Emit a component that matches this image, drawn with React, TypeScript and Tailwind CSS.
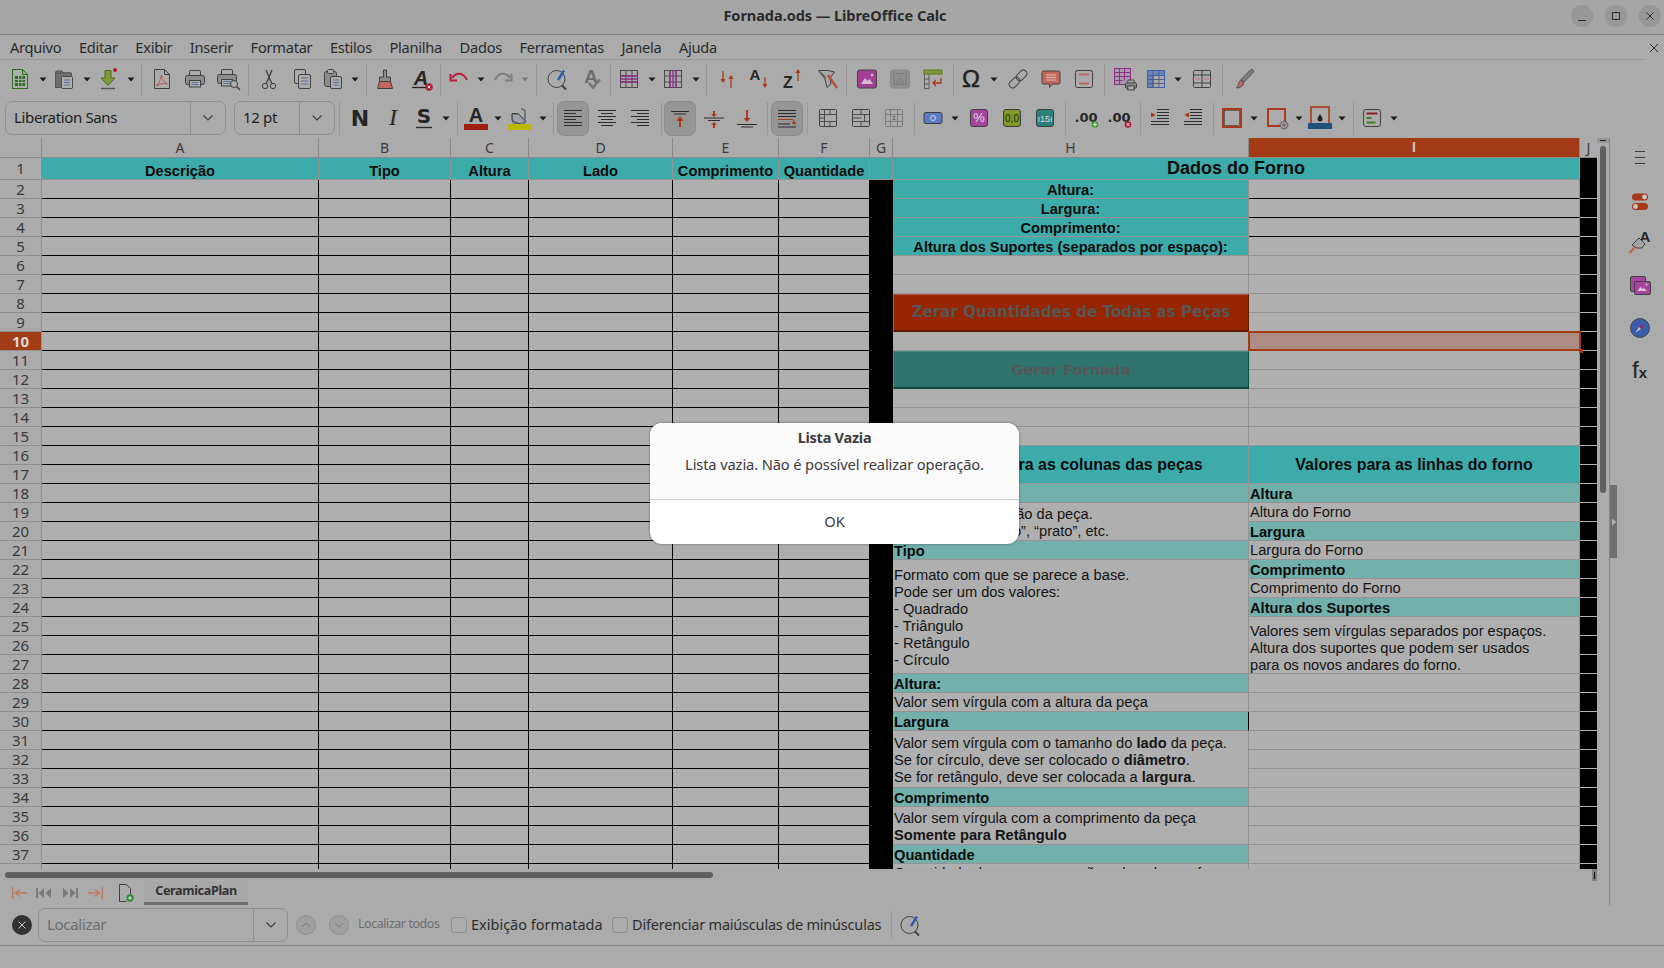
import React from "react";

const D = "#414141";
const OR = "#a83a1a";
const PU = "#8f2f8a";
const BL = "#3f62ad";
const LN = "#5d6f9f";

function I({ c = "", w = 24, h = 24, children }: { c?: string; w?: number; h?: number; children?: React.ReactNode }) {
  return (
    <svg width={w} height={h} viewBox={`0 0 ${w} ${h}`} fill="none" stroke={D} strokeWidth={1} className={"shrink-0 overflow-visible " + c}>
      {children}
    </svg>
  );
}
function Arr({ c = "", g = false }: { c?: string; g?: boolean }) {
  return (
    <svg width={10} height={24} viewBox="0 0 10 24" className={"shrink-0 " + c}>
      <path d="M1.5 10.5h7L5 14.5z" fill={g ? "#7d7d7d" : "#1c1c1c"} />
    </svg>
  );
}
function Sep({ c = "" }: { c?: string }) {
  return <div className={"w-px h-[33px] bg-[#989898] shrink-0 " + c}></div>;
}
function Tx({ x = 12, y = 18, s = 18, f = "Liberation Sans", b = true, i = false, fill = "#262626", a = "middle", children }: any) {
  return (
    <text x={x} y={y} fontSize={s} fontFamily={f} fontWeight={b ? 700 : 400} fontStyle={i ? "italic" : "normal"} fill={fill} stroke="none" textAnchor={a}>
      {children}
    </text>
  );
}
function Grid({ c = "", row, col, stroke = "#4a4a4a", color = PU }: { c?: string; row?: boolean; col?: boolean; stroke?: string; color?: string }) {
  return (
    <I c={c}>
      <rect x="3.5" y="3.5" width="17" height="17" stroke={stroke} />
      <path d="M3.5 9h17M3.5 15h17M9 3.5v17M15 3.5v17" stroke={stroke} />
      {row && <path d="M3.5 9h17M3.5 12h17M3.5 15h17" stroke={color} strokeWidth="1.4" />}
      {col && <path d="M9 3.5v17M12 3.5v17M15 3.5v17" stroke={color} strokeWidth="1.4" />}
    </I>
  );
}
function Lines({ rows }: { rows: [number, number][] }) {
  return (
    <I>
      {rows.map(([a, b], k) => (
        <path key={k} d={`M${a} ${4.5 + k * 3}H${b}`} stroke="#2c2c2c" />
      ))}
    </I>
  );
}
function Box({ c = "", children }: { c?: string; children?: React.ReactNode }) {
  return (
    <div className={"w-[32px] h-[35px] rounded-[7px] bg-[#969696] border border-[#8c8c8c] flex items-center justify-center shrink-0 " + c}>
      {children}
    </div>
  );
}
function Printer({ x = 0, y = 0 }: { x?: number; y?: number }) {
  return (
    <g transform={`translate(${x} ${y})`}>
      <rect x="6.5" y="3.5" width="11" height="6" rx="1" />
      <rect x="2.5" y="8.5" width="19" height="9" rx="2" fill="#8c8c8c" />
      <rect x="6.5" y="13.5" width="11" height="6.5" fill="#adadad" />
      <path d="M8.5 15.5h7M8.5 17.5h7" stroke={LN} />
    </g>
  );
}
function Toolbar1() {
  return (
    <div className="h-[40px] pb-[2px] flex items-center shrink-0">
      <I c="ml-[8px]">
        <path d="M4.5 2.5h10l5 5v14h-15z" stroke="#2a6e1e" fill="#a9ada9" />
        <path d="M14.5 2.5v5h5" stroke="#2a6e1e" />
        <rect x="7" y="9" width="10" height="10" fill="#2a6e1e" stroke="none" />
        <path d="M7 12.5h10M7 15.5h10M10.5 9v10M14 9v10" stroke="#a9ada9" />
      </I>
      <Arr c="ml-[6px]" />
      <I c="ml-[4px]">
        <path d="M3.5 20.5v-15a1.5 1.5 0 0 1 1.5-1.5h5l2 2h7v4" fill="#6e6e6e" stroke="#555" />
        <path d="M3.5 20.5h7V9.5h9V6H3.5z" fill="#6e6e6e" stroke="#555" />
        <rect x="9.5" y="9.5" width="11" height="12" rx="1" fill="#aeaeae" stroke="#4a4a4a" />
        <path d="M12 13h6M12 15.5h6M12 18h6" stroke={LN} />
      </I>
      <Arr c="ml-[6px]" />
      <I c="ml-[4px]">
        <path d="M9 3.5h6v7.5h4l-7 7.5-7-7.5h4z" fill="#7d9a35" stroke="#4b6a20" />
        <path d="M5 21.5h14" stroke="#555" strokeWidth="1.4" />
        <circle cx="19" cy="3" r="2" fill="#a51c30" stroke="none" />
      </I>
      <Arr c="ml-[6px]" />
      <Sep c="ml-[5px]" />
      <I c="ml-[8px]">
        <path d="M4.5 2.5h10l5 5v14h-15z" />
        <path d="M14.5 2.5v5h5" />
        <path d="M11.5 8c.5 5 2.5 7 6 9-4-1-7.5-.5-11 2 2-2 4-6 5-11z" stroke="#b4554f" />
      </I>
      <I c="ml-[9px]">
        <Printer />
      </I>
      <I c="ml-[10px]">
        <g transform="translate(-2 -1)">
          <Printer />
        </g>
        <circle cx="17" cy="17" r="3.5" fill="#adadad" />
        <path d="M19.5 19.5 23 23" strokeWidth="1.5" />
      </I>
      <Sep c="ml-[7px]" />
      <I c="ml-[8px]">
        <circle cx="8" cy="19" r="2.7" />
        <circle cx="16" cy="19" r="2.7" />
        <path d="M9.3 16.5 15 3M14.7 16.5 9 3" strokeWidth="1.3" />
      </I>
      <I c="ml-[9px]">
        <rect x="4.5" y="2.5" width="11" height="14" rx="1.5" />
        <rect x="8.5" y="7.5" width="12" height="14" rx="1.5" fill="#acacac" />
        <path d="M11 11h7M11 14h7M11 17h7" stroke={LN} />
      </I>
      <I c="ml-[7px]">
        <rect x="3.5" y="4.5" width="12" height="15" rx="2" fill="#8c8c8c" />
        <rect x="6.5" y="2.5" width="6" height="4" rx="1" fill="#acacac" />
        <rect x="9.5" y="9.5" width="11" height="12" rx="1.5" fill="#acacac" />
        <path d="M12 13h6M12 15.5h6M12 18h6" stroke={LN} />
      </I>
      <Arr c="ml-[5px]" />
      <Sep c="ml-[6px]" />
      <I c="ml-[6px]">
        <path d="M10.5 3h3v7h4v4.5H6.5V10h4z" fill="#8a8a8a" />
        <path d="M6.5 14.5h11l2 7h-15z" fill="#c0685a" />
      </I>
      <I c="ml-[12px]">
        <Tx y={18} s={20} i={true}>A</Tx>
        <path d="M3 20.5h14" stroke="#222" strokeWidth="1.3" />
        <circle cx="20" cy="20" r="3.8" fill="#b01c30" stroke="none" />
        <path d="M18.5 18.5l3 3m0-3l-3 3" stroke="#ddd" />
      </I>
      <Sep c="ml-[7px]" />
      <I c="ml-[6px]">
        <path d="M5 11c4-6 11-6 15 2" stroke="#b5213c" strokeWidth="2" />
        <path d="M3.5 7v6.5H10" stroke="#b5213c" strokeWidth="2" />
      </I>
      <Arr c="ml-[5px]" />
      <I c="ml-[5px]">
        <path d="M19 11c-4-6-11-6-15 2" stroke="#7e7e7e" strokeWidth="2" />
        <path d="M20.5 7v6.5H14" stroke="#7e7e7e" strokeWidth="2" />
      </I>
      <Arr c="ml-[5px]" g />
      <Sep c="ml-[6px]" />
      <I c="ml-[9px]">
        <circle cx="10.5" cy="12" r="8.5" />
        <path d="M16 18.5 20 22.5" strokeWidth="2" />
        <path d="M12 13 18 3.5" stroke="#2f5bb5" strokeWidth="2.5" />
      </I>
      <I c="ml-[10px]">
        <Tx x={11} y={16} s={19} fill="#6e6e6e">A</Tx>
        <path d="M9 16l4 4.5 7-8" stroke="#757575" strokeWidth="2.5" />
      </I>
      <Sep c="ml-[6px]" />
      <Grid c="ml-[6px]" row />
      <Arr c="ml-[6px]" />
      <Grid c="ml-[4px]" col />
      <Arr c="ml-[6px]" />
      <Sep c="ml-[5px]" />
      <I c="ml-[8px]">
        <path d="M8 4v11" stroke={OR} strokeWidth="1.3" />
        <path d="M5.5 12h5L8 16z" fill={OR} stroke="none" />
        <path d="M16 21V10" stroke={OR} strokeWidth="1.3" />
        <path d="M13.5 12h5L16 8z" fill={OR} stroke="none" />
      </I>
      <I c="ml-[8px]">
        <Tx x={8} y={13} s={15}>A</Tx>
        <path d="M18 10v10" stroke={OR} strokeWidth="1.3" />
        <path d="M15.5 17h5l-2.5 4z" fill={OR} stroke="none" />
      </I>
      <I c="ml-[10px]">
        <Tx x={7} y={21} s={16}>Z</Tx>
        <path d="M17 14V3" stroke={OR} strokeWidth="1.3" />
        <path d="M14.5 6h5L17 2z" fill={OR} stroke="none" />
      </I>
      <I c="ml-[11px]">
        <path d="M2.5 3.5h9l7 1.5-4.5 6 1 6-4 3.500-2-8.500z" fill="#a6a6a6" />
        <path d="M5 5.500 10 11" />
        <path d="M12 8 21 21" stroke="#b5513f" strokeWidth="2.5" />
      </I>
      <Sep c="ml-[6px]" />
      <I c="ml-[8px]">
        <rect x="2.5" y="3" width="19" height="18" rx="2" fill="#a23f95" stroke="#444" />
        <path d="M6 17l4-6 2.5 3 2-2 3.500 5z" fill="#d3bed1" stroke="none" />
        <circle cx="17" cy="8" r="1.3" fill="#d3bed1" stroke="none" />
      </I>
      <I c="ml-[9px]">
        <rect x="2.5" y="3" width="19" height="18" rx="2" fill="#8f8f8f" stroke="#8a8a8a" />
        <path d="M6 6.5h12v11H6zM9 17v-5M12 17v-7M15 17v-4" stroke="#7a7a7a" />
      </I>
      <I c="ml-[9px]">
        <rect x="3" y="3" width="18" height="4" fill="#7c9a34" stroke="#5c7a24" />
        <path d="M3.5 7v14.5H8V7M3.5 12h4.5M3.5 17h4.5" stroke="#5e5e5e" />
        <path d="M20 11v5h-8M15 13l-3 3 3 3" stroke={OR} strokeWidth="1.3" />
      </I>
      <Sep c="ml-[8px]" />
      <I c="ml-[5px]">
        <text x={12} y={20} fontSize={24} fontFamily="Liberation Sans" fill="#222" stroke="#222" strokeWidth={0.5} textAnchor="middle">Ω</text>
      </I>
      <Arr c="ml-[6px]" />
      <I c="ml-[7px]">
        <g transform="rotate(-45 12 12)">
          <rect x="1" y="8.5" width="12" height="7" rx="3.5" />
          <rect x="11" y="8.5" width="12" height="7" rx="3.5" />
        </g>
      </I>
      <I c="ml-[9px]">
        <path d="M3 5.500a1.500 1.500 0 0 1 1.500-1.500h15a1.500 1.500 0 0 1 1.500 1.500v10a1.500 1.500 0 0 1-1.500 1.500h-6l-3 3.500v-3.500H4.500A1.500 1.500 0 0 1 3 15.500z" fill="#c3675a" stroke="#444" />
        <path d="M7 8h10M7 10.5h10M7 13h10" stroke="#d8c0b8" />
      </I>
      <I c="ml-[9px]">
        <rect x="3.5" y="3.5" width="17" height="17" rx="2" />
        <path d="M7 7.5h10M7 16.5h10" stroke="#b86a5a" strokeWidth="2" />
      </I>
      <Sep c="ml-[8px]" />
      <I c="ml-[8px]">
        <rect x="1.5" y="1.5" width="16" height="16" stroke={PU} fill="#a89aa8" />
        <path d="M1.5 5.5h16M1.5 9.5h16M1.5 13.5h8M6.5 1.5v16M11.5 1.5v12" stroke={PU} />
        <g transform="translate(11 11) scale(.58)">
          <rect x="6.5" y="3.5" width="11" height="6" rx="1" strokeWidth="1.7" fill="#ababab" />
          <rect x="2.5" y="8.5" width="19" height="9" rx="2" fill="#8c8c8c" strokeWidth="1.7" />
          <rect x="6.5" y="13.5" width="11" height="7" fill="#adadad" strokeWidth="1.7" />
        </g>
      </I>
      <I c="ml-[7px]">
        <rect x="3.5" y="3.5" width="17" height="17" stroke={BL} />
        <rect x="3.5" y="3.5" width="5.5" height="17" fill="#6a83bc" stroke={BL} />
        <rect x="3.5" y="3.5" width="17" height="5" fill="#6a83bc" stroke={BL} />
        <path d="M3.5 12.5h17M3.5 16.5h17M9 3.5v17M15 3.5v17" stroke="#505f84" />
      </I>
      <Arr c="ml-[5px]" />
      <I c="ml-[7px]">
        <rect x="3.5" y="3.5" width="17" height="17" rx="1" />
        <path d="M12 3.5v17M3.5 8h17M3.5 16h17" />
        <path d="M2 12h20" stroke="#c0687a" strokeDasharray="2 1" />
      </I>
      <Sep c="ml-[8px]" />
      <I c="ml-[8px]">
        <path d="M20 2.5a2 2 0 0 1 2.5 2.5L13 15l-3-2.5z" fill="#7d7d7d" stroke="#555" />
        <path d="M9.5 13 13 16c-1 3-4 5-7.5 5 1.5-2 2-5 4-8z" fill="#c0685a" stroke="#555" />
      </I>
    </div>
  );
}

function Combo({ c = "", div, text }: { c: string; div: string; text: string }) {
  return (
    <div className={"h-[34px] rounded-[7px] border border-[#8f8f8f] flex items-center shrink-0 " + c}>
      <div className={"pl-[8px] pb-[2px] text-[15px] text-[#1e1e1e] whitespace-nowrap font-['Noto_Sans',sans-serif] tracking-[-0.35px] " + div}>{text}</div>
      <div className="flex-1 h-full border-l border-[#8f8f8f] flex items-center justify-center">
        <svg width="12" height="8" viewBox="0 0 12 8" fill="none" stroke="#3d3d3d" strokeWidth="1.1">
          <path d="M1.5 1.5 6 6l4.5-4.5" />
        </svg>
      </div>
    </div>
  );
}
function VA({ k }: { k: number }) {
  return (
    <I>
      {k === 0 && (
        <>
          <path d="M3 5.5h18M6 8h12" stroke="#2c2c2c" />
          <path d="M12 21v-8" stroke={OR} strokeWidth="2" />
          <path d="M8.5 15l3.5-5 3.5 5z" fill={OR} stroke="none" />
        </>
      )}
      {k === 1 && (
        <>
          <path d="M2 12h20M6 14.5h12" stroke="#2c2c2c" />
          <path d="M12 5v3" stroke={OR} strokeWidth="2" />
          <path d="M9 8h6l-3 3z" fill={OR} stroke="none" />
          <path d="M12 19v3" stroke={OR} strokeWidth="2" />
          <path d="M9 19h6l-3-3z" fill={OR} stroke="none" />
        </>
      )}
      {k === 2 && (
        <>
          <path d="M2 18.5h20M6 21h12" stroke="#2c2c2c" />
          <path d="M12 4v9" stroke={OR} strokeWidth="2" />
          <path d="M8.5 12h7L12 16z" fill={OR} stroke="none" />
        </>
      )}
    </I>
  );
}
function Cel({ c = "", fill, t, tf = "#ddd", ts = 10 }: { c?: string; fill: string; t: string; tf?: string; ts?: number }) {
  return (
    <I c={c}>
      <rect x="3.5" y="3.5" width="17" height="17" rx="2.5" fill={fill} stroke="#3d3d3d" />
      <Tx y={16} s={ts} b={false} fill={tf}>{t}</Tx>
    </I>
  );
}
function Toolbar2() {
  return (
    <div className="h-[38px] pb-[2px] flex items-center shrink-0">
      <Combo c="ml-[5px] w-[221px]" div="w-[184px]" text="Liberation Sans" />
      <Combo c="ml-[8px] w-[101px]" div="w-[64px]" text="12 pt" />
      <Sep c="ml-[4px]" />
      <I c="ml-[8px]">
        <Tx y={20} s={22} f="DejaVu Sans">N</Tx>
      </I>
      <I c="ml-[9px]">
        <Tx y={19} s={24} b={false} i={true} f="Liberation Serif">I</Tx>
      </I>
      <I c="ml-[7px]">
        <Tx y={17} s={20} f="DejaVu Sans">S</Tx>
        <path d="M4 21.5h16" stroke="#2c2c2c" strokeWidth="1.3" />
      </I>
      <Arr c="ml-[5px]" />
      <Sep c="ml-[6px]" />
      <I c="ml-[6px]">
        <Tx y={16} s={20}>A</Tx>
        <rect x="0" y="18" width="24" height="6" fill="#a01f12" stroke="none" />
      </I>
      <Arr c="ml-[5px]" />
      <I c="ml-[5px]">
        <path d="M4 8.5h7l6 6-4 3H5z" fill="#8e9cac" opacity=".5" />
        <path d="M4 7.5h6l8 8-4 3-6-2-4-2zM13 2.5l4 2v9" />
        <rect x="0" y="18" width="24" height="6" fill="#bcb900" stroke="none" />
      </I>
      <Arr c="ml-[6px]" />
      <Sep c="ml-[5px]" />
      <Box c="ml-[3px]">
        <Lines rows={[[3, 21], [3, 15], [3, 21], [3, 15], [3, 21], [3, 21]]} />
      </Box>
      <div className="ml-[6px]">
        <Lines rows={[[3, 21], [6, 18], [3, 21], [6, 18], [3, 21], [6, 18]]} />
      </div>
      <div className="ml-[9px]">
        <Lines rows={[[3, 21], [9, 21], [3, 21], [9, 21], [3, 21], [9, 21]]} />
      </div>
      <Sep c="ml-[9px]" />
      <Box c="ml-[2px]">
        <VA k={0} />
      </Box>
      <div className="ml-[6px]">
        <VA k={1} />
      </div>
      <div className="ml-[9px]">
        <VA k={2} />
      </div>
      <Sep c="ml-[8px]" />
      <Box c="ml-[3px]">
        <I>
          <path d="M3 4.5h18M3 7.5h18M3 10.5h18" stroke="#2c2c2c" />
          <path d="M3 13.5h14a2 2 0 0 1 2 2v1" stroke={OR} />
          <path d="M16.5 16h5L19 19z" fill={OR} stroke="none" />
          <path d="M3 18h12M3 21h18" stroke="#2c2c2c" />
        </I>
      </Box>
      <Sep c="ml-[4px]" />
      <I c="ml-[8px]">
        <rect x="3.5" y="3.5" width="17" height="17" rx="1" />
        <path d="M3.5 8.5h5v7h-5M3.5 12h5M20.5 8.5h-12M8.5 3.5v17M14 3.5v5M14 15.5v5M8.5 15.5h12" stroke="#4d4d4d" />
      </I>
      <I c="ml-[9px]">
        <rect x="3.5" y="3.5" width="17" height="17" rx="1" />
        <path d="M3.5 8.5h17M3.5 15.5h17M3.5 12h9M12 3.5v5M12 15.5v5M15.5 8.5v7" stroke="#4d4d4d" />
      </I>
      <I c="ml-[9px]">
        <rect x="3.5" y="3.5" width="17" height="17" rx="1" stroke="#7d7d7d" />
        <path d="M3.5 8.5h5M15.5 8.5h5M3.5 15.5h5M15.5 15.5h5M8.5 3.5v17M15.5 3.5v17M8.5 8.5h7M8.5 15.5h7" stroke="#7d7d7d" />
        <path d="M10 10h4l-2 2zM10 14h4l-2-2z" fill="#6a6a6a" stroke="none" />
      </I>
      <Sep c="ml-[8px]" />
      <I c="ml-[6px]">
        <rect x="3" y="6.5" width="18" height="11" rx="2" fill="#5b7cc4" stroke="#3d3d3d" />
        <circle cx="12" cy="12" r="2.5" stroke="#c8d3ea" />
      </I>
      <Arr c="ml-[5px]" />
      <Cel c="ml-[7px]" fill="#a8449f" t="%" ts={13} />
      <Cel c="ml-[9px]" fill="#809b27" t="0,0" tf="#202020" ts={10} />
      <Cel c="ml-[9px]" fill="#2c807a" t="ı15ı" ts={9} />
      <Sep c="ml-[8px]" />
      <I c="ml-[9px]">
        <Tx x={11} y={16} s={13} f="DejaVu Sans">.00</Tx>
        <circle cx="20" cy="18.5" r="3.3" fill="#3f9e3a" stroke="none" />
        <path d="M18 18.5h4M20 16.5v4" stroke="#e4e4e4" />
      </I>
      <I c="ml-[9px]">
        <Tx x={11} y={16} s={13} f="DejaVu Sans">.00</Tx>
        <circle cx="20" cy="18.5" r="3.3" fill="#b01c30" stroke="none" />
        <path d="M18.5 17l3 3m0-3l-3 3" stroke="#e4e4e4" />
      </I>
      <Sep c="ml-[8px]" />
      <I c="ml-[7px]">
        <path d="M3 6.5l4.5 2.5L3 11.5z" fill={OR} stroke="none" />
        <path d="M9 3.5h12M9 6.5h12M9 9.5h12M9 12.5h12M3 15.5h18M3 18.5h18" stroke="#2c2c2c" />
      </I>
      <I c="ml-[9px]">
        <path d="M8 6.5 3.5 9 8 11.5z" fill={OR} stroke="none" />
        <path d="M9 3.5h12M9 6.5h12M9 9.5h12M9 12.5h12M3 15.5h18M3 18.5h18" stroke="#2c2c2c" />
      </I>
      <Sep c="ml-[8px]" />
      <I c="ml-[6px]">
        <rect x="3" y="3" width="18" height="18" stroke={OR} strokeWidth="2" />
        <rect x="4.5" y="4.5" width="15" height="15" stroke="#333" strokeWidth=".6" />
      </I>
      <Arr c="ml-[5px]" />
      <I c="ml-[6px]">
        <rect x="3" y="3" width="17" height="17" stroke={OR} strokeWidth="2" />
        <circle cx="19" cy="19" r="3.7" fill="#a4a4a4" stroke="#5e5e5e" strokeWidth="1.5" strokeDasharray="1.5 .8" />
        <circle cx="19" cy="19" r="1.2" stroke="#5e5e5e" />
      </I>
      <Arr c="ml-[5px]" />
      <I c="ml-[4px]">
        <rect x="3" y="1" width="18" height="18" stroke={OR} strokeWidth="1.6" />
        <path d="M12 8c2 3 2.5 4 2.5 5a2.5 2.5 0 0 1-5 0c0-1 .5-2 2.5-5z" fill="#222" stroke="none" />
        <rect x="0" y="17" width="24" height="6" fill="#1f4f7d" stroke="none" />
      </I>
      <Arr c="ml-[5px]" />
      <Sep c="ml-[6px]" />
      <I c="ml-[6px]">
        <rect x="3.5" y="3.5" width="17" height="17" rx="2.5" />
        <path d="M6.5 7.5h11" stroke="#8d1f20" strokeWidth="2" />
        <path d="M6.5 12h5" stroke="#3f7d22" strokeWidth="2" />
        <path d="M6.5 16.5h9" stroke="#3f7d22" strokeWidth="2" />
      </I>
      <Arr c="ml-[5px]" />
    </div>
  );
}

const LSANS = "font-['Liberation_Sans',sans-serif]";
const gridCell = "border-r border-b border-[#939393] flex items-center overflow-hidden whitespace-nowrap min-w-0 ";
const teal = gridCell + "bg-[#3dabaa] ";
const light = gridCell + "bg-[#72b0ab] pl-[1px] pt-[1px] font-bold text-[#0c0c0c] ";
const plain = gridCell + "bg-[#afafaf] ";
const body = "pl-[1px] text-[#141414] leading-[17px] ";

function Blank({ c = "" }: { c?: string }) {
  return <div className={plain + c}></div>;
}
function Txt({ c = "", children }: { c?: string; children?: React.ReactNode }) {
  return <div className={plain + body + "pt-[1px] " + c}>{children}</div>;
}
function Lt({ c = "", children }: { c?: string; children?: React.ReactNode }) {
  return <div className={light + c}>{children}</div>;
}
function Multi({ c = "", lines }: { c?: string; lines: React.ReactNode[] }) {
  return (
    <div className={plain + "!flex flex-col !items-start justify-center " + body + c}>
      {lines.map((l, k) => (
        <div key={k}>{l}</div>
      ))}
    </div>
  );
}
function TealH({ children }: { children?: React.ReactNode }) {
  return <div className={teal + "justify-center pt-[1px] font-bold text-[#0c0c0c]"}>{children}</div>;
}

const rightCols: Record<number, React.ReactNode> = {
  2: (<><TealH>Altura:</TealH><Blank c="!border-b-black" /></>),
  3: (<><TealH>Largura:</TealH><Blank c="!border-b-black" /></>),
  4: (<><TealH>Comprimento:</TealH><Blank c="!border-b-black" /></>),
  5: (<><TealH>Altura dos Suportes (separados por espaço):</TealH><Blank /></>),
  6: (<><Blank /><Blank /></>),
  7: (<><Blank /><Blank /></>),
  8: (<>
    <div className="row-span-2 bg-[#972600] border-t border-l border-t-[#b35c45] border-l-[#b35c45] border-r border-b-2 border-r-[#651a00] border-b-[#651a00] flex items-center justify-center font-['DejaVu_Sans',sans-serif] font-bold text-[15.1px] text-[#565656]">
      Zerar Quantidades de Todas as Peças
    </div>
    <Blank />
  </>),
  9: (<Blank />),
  10: (<>
    <Blank />
    <div className="relative z-10 bg-[#ac8e84] border-b border-[#939393]">
      <div className="absolute -left-[1px] -top-[1px] right-[-1px] bottom-[-1px] border-2 border-[#a33b16]"></div>
      <div className="absolute -right-[3px] -bottom-[3px] w-[4px] h-[4px] bg-[#a33b16]"></div>
    </div>
  </>),
  11: (<>
    <div className="row-span-2 bg-[#2e746c] border-t border-l border-t-[#4f8c86] border-l-[#4f8c86] border-r border-b-2 border-r-[#0f4a42] border-b-[#0f4a42] flex items-center justify-center font-['DejaVu_Sans',sans-serif] font-bold text-[14.67px] text-[#565656]">
      Gerar Fornada
    </div>
    <Blank />
  </>),
  12: (<Blank />),
  13: (<><Blank /><Blank /></>),
  14: (<><Blank /><Blank /></>),
  15: (<><Blank /><Blank /></>),
  16: (<>
    <div className={teal + "row-span-2 justify-center font-bold text-[16px] text-[#0c0c0c]"}>Valores para as colunas das peças</div>
    <div className={teal + "row-span-2 justify-center font-bold text-[16px] text-[#0c0c0c]"}>Valores para as linhas do forno</div>
  </>),
  18: (<><Lt>Descrição</Lt><Lt>Altura</Lt></>),
  19: (<><Multi c="row-span-2 pt-[2px]" lines={["Nome ou a descrição da peça.", "Por exemplo: “copo”, “prato”, etc."]} /><Txt>Altura do Forno</Txt></>),
  20: (<Lt>Largura</Lt>),
  21: (<><Lt>Tipo</Lt><Txt>Largura do Forno</Txt></>),
  22: (<>
    <Multi c="row-span-6 pt-[2px]" lines={["Formato com que se parece a base.", "Pode ser um dos valores:", "- Quadrado", "- Triângulo", "- Retângulo", "- Círculo"]} />
    <Lt>Comprimento</Lt>
  </>),
  23: (<Txt>Comprimento do Forno</Txt>),
  24: (<Lt>Altura dos Suportes</Lt>),
  25: (<Multi c="row-span-3 !justify-start pt-[6px]" lines={["Valores sem vírgulas separados por espaços.", "Altura dos suportes que podem ser usados", "para os novos andares do forno."]} />),
  28: (<><Lt>Altura:</Lt><Blank /></>),
  29: (<><Txt>Valor sem vírgula com a altura da peça</Txt><Blank /></>),
  30: (<><Lt c="!border-r-black">Largura</Lt><Blank /></>),
  31: (<>
    <Multi c="row-span-3 pt-[2px]" lines={[
      <>Valor sem vírgula com o tamanho do <b>lado</b> da peça.</>,
      <>Se for círculo, deve ser colocado o <b>diâmetro</b>.</>,
      <>Se for retângulo, deve ser colocada a <b>largura</b>.</>,
    ]} />
    <Blank />
  </>),
  32: (<Blank />),
  33: (<Blank />),
  34: (<><Lt>Comprimento</Lt><Blank /></>),
  35: (<>
    <Multi c="row-span-2 pt-[2px]" lines={["Valor sem vírgula com a comprimento da peça", <b>Somente para Retângulo</b>]} />
    <Blank />
  </>),
  36: (<Blank />),
  37: (<><Lt>Quantidade</Lt><Blank /></>),
  38: (<><Txt>Quantidade de peças que serão colocadas no forno.</Txt><Blank /></>),
};

const colHead = "border-r border-b border-[#8a8a8a] flex items-center justify-center text-[14px] text-[#3c3c3c] font-['Noto_Sans',sans-serif] ";
const rowHead = "border-r border-b border-[#8f8f8f] flex items-center justify-center text-[15px] text-[#3a3a3a] font-['Noto_Sans',sans-serif] bg-[#ababab] ";
const bk = "border-r border-b border-black bg-[#afafaf]";
const hd = "flex items-center justify-center pt-[4px] font-bold text-[#0c0c0c] border-r border-b border-[#939393] bg-[#3dabaa] overflow-hidden whitespace-nowrap";

function Sheet() {
  const rows: React.ReactNode[] = [];
  for (let n = 2; n <= 38; n++) {
    rows.push(
      <React.Fragment key={n}>
        <div className={n === 10 ? rowHead + "!bg-[#a33b16] !text-[#d9d9d9] font-bold" : rowHead}>{n}</div>
        <div className={bk}></div>
        <div className={bk}></div>
        <div className={bk}></div>
        <div className={bk}></div>
        <div className={bk}></div>
        <div className={bk}></div>
        <div className="bg-black"></div>
        {rightCols[n]}
        <div className="bg-black border-b border-[#b4b4b4]"></div>
      </React.Fragment>
    );
  }
  return (
    <div className={"w-[1597px] h-[731px] overflow-hidden grid grid-cols-[42px_277px_132px_78px_144px_106px_91px_23px_356px_331px_17px] grid-rows-[20px_22px] auto-rows-[19px] text-[14.67px] relative " + LSANS}>
      <div className="border-r border-b border-[#8a8a8a]"></div>
      <div className={colHead}>A</div>
      <div className={colHead}>B</div>
      <div className={colHead}>C</div>
      <div className={colHead}>D</div>
      <div className={colHead}>E</div>
      <div className={colHead}>F</div>
      <div className={colHead}>G</div>
      <div className={colHead}>H</div>
      <div className="border-r border-b border-[#8a8a8a] flex items-center justify-center text-[14px] bg-[#a33b16] text-[#c9c9c9] font-bold font-['Liberation_Sans',sans-serif]">I</div>
      <div className="flex items-center justify-center text-[14px] text-[#3c3c3c] border-b border-[#8a8a8a] font-['Noto_Sans',sans-serif]">J</div>

      <div className={rowHead}>1</div>
      <div className={hd}>Descrição</div>
      <div className={hd}>Tipo</div>
      <div className={hd}>Altura</div>
      <div className={hd}>Lado</div>
      <div className={hd}>Comprimento</div>
      <div className={hd}>Quantidade</div>
      <div className={hd}></div>
      <div className={teal + "col-span-2 justify-center font-bold text-[18px] text-[#0c0c0c]"}>Dados do Forno</div>
      <div className="bg-black"></div>
      {rows}
    </div>
  );
}

function Find() {
  return (
    <div className="h-[39px] pb-[2px] flex items-center shrink-0 font-['Noto_Sans',sans-serif]">
      <div className="ml-[12px] w-[20px] h-[20px] rounded-full bg-[#333333] flex items-center justify-center shrink-0">
        <svg width="10" height="10" viewBox="0 0 10 10" stroke="#c8c8c8" fill="none">
          <path d="M1.5 1.5l7 7m0-7l-7 7" />
        </svg>
      </div>
      <div className="ml-[6px] w-[250px] h-[34px] rounded-[7px] border border-[#8f8f8f] flex items-center shrink-0">
        <div className="w-[214px] pl-[8px] text-[15px] text-[#6e6e6e] tracking-[-0.3px]">Localizar</div>
        <div className="flex-1 h-full border-l border-[#8f8f8f] flex items-center justify-center">
          <svg width="12" height="8" viewBox="0 0 12 8" fill="none" stroke="#3d3d3d" strokeWidth="1.1">
            <path d="M1.5 1.5 6 6l4.5-4.5" />
          </svg>
        </div>
      </div>
      <div className="ml-[8px] w-[20px] h-[20px] rounded-full border border-[#8f8f8f] bg-[#a0a0a0] flex items-center justify-center shrink-0">
        <svg width="10" height="8" viewBox="0 0 10 8" fill="none" stroke="#7b7b7b">
          <path d="M1 6l4-4 4 4" />
        </svg>
      </div>
      <div className="ml-[13px] w-[20px] h-[20px] rounded-full border border-[#8f8f8f] bg-[#a0a0a0] flex items-center justify-center shrink-0">
        <svg width="10" height="8" viewBox="0 0 10 8" fill="none" stroke="#7b7b7b">
          <path d="M1 2l4 4 4-4" />
        </svg>
      </div>
      <div className="ml-[9px] w-[84px] text-[12.5px] text-[#6e6e6e] whitespace-nowrap tracking-[-0.45px]">Localizar todos</div>
      <div className="ml-[9px] w-[16px] h-[16px] rounded-[3px] border border-[#8f8f8f] shrink-0"></div>
      <div className="ml-[4px] w-[137px] text-[14.5px] text-[#2e2e2e] whitespace-nowrap tracking-[0px]">Exibição formatada</div>
      <div className="ml-[4px] w-[16px] h-[16px] rounded-[3px] border border-[#8f8f8f] shrink-0"></div>
      <div className="ml-[4px] w-[254px] text-[14.5px] text-[#2e2e2e] whitespace-nowrap tracking-[-0.2px]">Diferenciar maiúsculas de minúsculas</div>
      <div className="ml-[5px] w-px h-[28px] bg-[#989898] shrink-0"></div>
      <I c="ml-[7px]">
        <circle cx="10.5" cy="12" r="8.5" />
        <path d="M16 18.5 20 22.5" strokeWidth="2" />
        <path d="M12 13 18 3.5" stroke="#2f5bb5" strokeWidth="2.5" />
      </I>
    </div>
  );
}

function Sidebar() {
  return (
    <div className="w-[55px] flex flex-col items-center border-l border-[#8a8a8a] pt-[7px] pl-[5px] shrink-0 relative">
      <I>
        <path d="M7 6.5h10M7 12.5h10M7 18.5h10" stroke="#3a3a3a" />
      </I>
      <I c="mt-[21px]">
        <rect x="4" y="3.5" width="16" height="7" rx="3.5" fill={OR} stroke="none" />
        <circle cx="16.5" cy="7" r="2.4" fill="#c8c8c8" stroke="none" />
        <rect x="4" y="13" width="16" height="7" rx="3.5" fill={OR} stroke="none" />
        <circle cx="7.5" cy="16.5" r="2.4" fill="#c8c8c8" stroke="none" />
      </I>
      <I c="mt-[17px]">
        <Tx x={17} y={11} s={15}>A</Tx>
        <path d="M4 14l7-7 6 6-3 4H9z" fill="#a4a4a4" />
        <path d="M7 16 1.5 22" stroke="#c0685a" strokeWidth="2.5" />
      </I>
      <I c="mt-[19px]">
        <rect x="2.5" y="2.5" width="15" height="15" rx="1.5" fill="#a8449f" />
        <rect x="6.5" y="7.5" width="16" height="13" rx="1.5" fill="#a8449f" />
        <path d="M9.5 17l3-4 2 2 1.5-1 3 3z" fill="#d9c6d6" stroke="none" />
        <circle cx="18.5" cy="10.5" r="1" fill="#d9c6d6" stroke="none" />
      </I>
      <I c="mt-[18px]">
        <circle cx="12" cy="12" r="9.5" fill="#3a5dae" stroke="#444" />
        <path d="M16.5 7.500 13 13l-2-2z" fill="#b5213c" stroke="none" />
        <path d="M7.500 16.500 11 11l2 2z" fill="#c8c8c8" stroke="none" />
      </I>
      <div className="mt-[18px] w-[24px] h-[24px] flex items-baseline justify-center text-[#262626] font-['Liberation_Sans',sans-serif] text-[24px] leading-[24px]">
        f<span className="text-[15px] font-bold">x</span>
      </div>
      <div className="absolute left-0 top-[347px] w-[7px] h-[73px] bg-[#707070] flex items-center justify-center">
        <svg width="6" height="8" viewBox="0 0 6 8">
          <path d="M1 0.5 5.5 4 1 7.5z" fill="#b0b0b0" />
        </svg>
      </div>
    </div>
  );
}

export default function App() {
  return (
    <div className="w-[1664px] h-[968px] bg-[#ababab] flex flex-col overflow-hidden relative">
      <div className="h-[35px] border-b border-[#868686] bg-[#a6a6a6] flex items-center justify-end relative shrink-0">
        <div className="absolute inset-x-0 pl-[6px] text-center font-['Noto_Sans',sans-serif] font-bold text-[14.5px] text-[#2a2a2a] tracking-[-0.04px] -mt-[2px]">Fornada.ods — LibreOffice Calc</div>
        <div className="flex gap-[12px] pr-[3px] -mt-[2px] relative">
          <div className="w-[22px] h-[22px] rounded-full bg-[#979797] flex items-center justify-center">
            <svg width="10" height="10" viewBox="0 0 10 10" stroke="#2f2f2f" fill="none"><path d="M1 9.5h8" /></svg>
          </div>
          <div className="w-[22px] h-[22px] rounded-full bg-[#979797] flex items-center justify-center">
            <svg width="10" height="10" viewBox="0 0 10 10" stroke="#2f2f2f" fill="none"><rect x="1.5" y="1.5" width="7" height="7" /></svg>
          </div>
          <div className="w-[22px] h-[22px] rounded-full bg-[#979797] flex items-center justify-center">
            <svg width="10" height="10" viewBox="0 0 10 10" stroke="#2f2f2f" fill="none"><path d="M1.5 1.5l7 7m0-7l-7 7" /></svg>
          </div>
        </div>
      </div>
      <div className="h-[25px] flex shrink-0">
        <div className="w-[1644px] border-b border-[#989898] pt-[1px] flex items-center gap-[17.5px] pl-[10px] font-['Noto_Sans',sans-serif] text-[14.6px] text-[#2a2a2a] tracking-[-0.24px]">
          <span>Arquivo</span><span>Editar</span><span>Exibir</span><span>Inserir</span><span>Formatar</span><span>Estilos</span><span>Planilha</span><span>Dados</span><span>Ferramentas</span><span>Janela</span><span>Ajuda</span>
        </div>
        <div className="flex-1 flex items-center justify-center">
          <svg width="10" height="10" viewBox="0 0 10 10" stroke="#2f2f2f" fill="none"><path d="M1 1l8 8m0-8l-8 8" /></svg>
        </div>
      </div>
      <Toolbar1 />
      <Toolbar2 />
      <div className="flex h-[768px] shrink-0">
        <div className="w-[1609px] flex flex-col shrink-0">
          <div className="flex h-[731px]">
            <Sheet />
            <div className="w-[12px] flex flex-col shrink-0">
              <div className="h-[5px] bg-[#969696] flex items-center justify-center">
                <div className="w-[6px] h-px bg-[#222]"></div>
              </div>
              <div className="ml-[3px] mt-[3px] w-[6px] h-[347px] rounded-full bg-[#606060]"></div>
            </div>
          </div>
          <div className="h-[12px] flex items-start shrink-0 relative">
            <div className="ml-[5px] mt-[3px] w-[708px] h-[6px] rounded-full bg-[#606060]"></div>
            <div className="ml-[879px] w-[5px] h-[12px] bg-[#808080] flex items-center justify-center">
              <div className="w-px h-[7px] bg-black"></div>
            </div>
          </div>
          <div className="h-[25px] pb-[2px] flex items-center shrink-0">
            <svg width="16" height="12" viewBox="0 0 16 12" className="ml-[12px]" fill="none" stroke="#bd7a60" strokeWidth="1.3">
              <path d="M.7 0v12M15 6H4M8 2.5 3.5 6 8 9.5" />
            </svg>
            <svg width="16" height="10" viewBox="0 0 16 10" className="ml-[8px]">
              <path d="M0 0h2v10H0zM8 0v10L2.5 5zM15 0v10L9.5 5z" fill="#7a7a7a" />
            </svg>
            <svg width="16" height="10" viewBox="0 0 16 10" className="ml-[10px]">
              <path d="M14 0h2v10h-2zM8 0v10l5.5-5zM1 0v10l5.5-5z" fill="#7a7a7a" />
            </svg>
            <svg width="16" height="12" viewBox="0 0 16 12" className="ml-[9px]" fill="none" stroke="#bd7a60" strokeWidth="1.3">
              <path d="M15.3 0v12M1 6h11M8 2.5 12.5 6 8 9.5" />
            </svg>
            <svg width="16" height="20" viewBox="0 0 16 20" className="ml-[15px]" fill="none" stroke="#3f3f3f">
              <path d="M1.5 1.5h7l4 4v6M1.5 1.5v17h7" />
              <circle cx="12" cy="15" r="3.7" fill="#2f8a3a" stroke="none" />
              <path d="M10 15h4M12 13v4" stroke="#e0e0e0" />
            </svg>
            <div className="ml-[10px] w-[104px] h-[24px] bg-[#a8a8a8] border-b-[3px] border-[#6f6f6f] flex items-center justify-center font-['Noto_Sans',sans-serif] font-bold text-[12.6px] text-[#333] tracking-[-0.35px]">CeramicaPlan</div>
          </div>
        </div>
        <Sidebar />
      </div>
      <Find />
      <div className="flex-1 border-t border-[#868686]"></div>

      <div className="absolute left-[650px] top-[423px] w-[369px] h-[121px] rounded-[12px] bg-white shadow-[0_0_3px_rgba(0,0,0,0.4)] overflow-hidden flex flex-col z-20 font-['Noto_Sans',sans-serif]">
        <div className="h-[77px] bg-[#fafafa] border-b border-[#c9c9c9] flex flex-col items-center shrink-0">
          <div className="mt-[4px] font-bold text-[14.5px] leading-[20px] text-[#3d3d3d] tracking-[-0.25px]">Lista Vazia</div>
          <div className="mt-[7px] text-[14.7px] leading-[20px] text-[#3d3d3d] tracking-[-0.13px]">Lista vazia. Não é possível realizar operação.</div>
        </div>
        <div className="flex-1 flex items-center justify-center pb-[2px] text-[14.7px] text-[#3d3d3d]">OK</div>
      </div>
    </div>
  );
}
